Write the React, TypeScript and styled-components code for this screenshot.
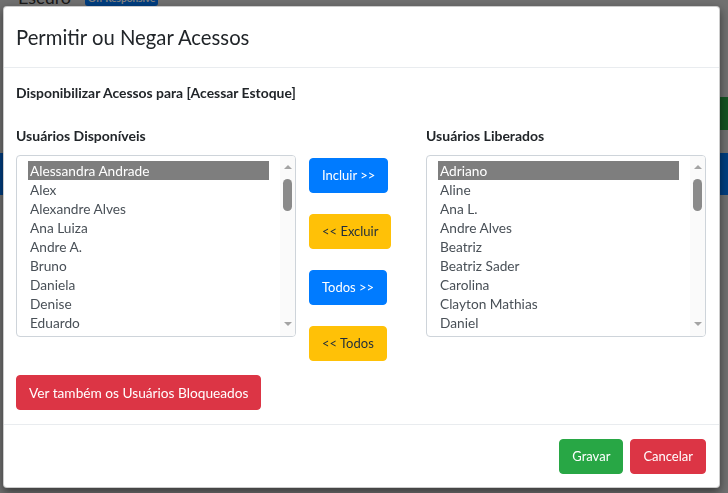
import React from 'react';
import styled, { createGlobalStyle } from 'styled-components';

const GlobalStyle = createGlobalStyle`
  html, body {
    margin: 0;
    padding: 0;
  }
  body {
    font-family: Lato, "Liberation Sans", Arial, sans-serif;
    background: #e0e0e0;
    color: #212529;
    overflow: hidden;
  }
`;

/* page behind the modal */
const Page = styled.div`
  width: 728px;
  height: 493px;
  overflow: hidden;
`;

const TopRow = styled.div`
  display: flex;
  align-items: flex-end;
  gap: 14px;
  height: 18px;
  margin-top: -12px;
  padding-left: 18px;
`;

const PageText = styled.span`
  font-size: 18px;
  line-height: 18px;
  color: #333;
`;

const Badge = styled.span`
  background: #007bff;
  color: #fff;
  font-size: 10px;
  font-weight: 700;
  line-height: 16px;
  padding: 0 3px;
  border-radius: 3px;
`;

const ActionRow = styled.div`
  display: flex;
  justify-content: flex-end;
  margin-top: 91px;
`;

const GreenTab = styled.div`
  width: 30px;
  height: 33px;
  background: #28a745;
  color: #fff;
  font-size: 16px;
  line-height: 33px;
  padding-left: 2px;
  box-sizing: border-box;
`;

const BlueBand = styled.div`
  margin-top: 23px;
  height: 42px;
  background: #007bff;
`;

const Backdrop = styled.div`
  position: fixed;
  inset: 0;
  background: rgba(0, 0, 0, 0.5);
`;

/* modal */
const Modal = styled.div`
  position: fixed;
  top: 6px;
  left: 3px;
  width: 717px;
  box-sizing: border-box;
  background: #fff;
  border: 1px solid rgba(0, 0, 0, 0.2);
  border-radius: 4px;
  box-shadow: 0 4px 10px rgba(0, 0, 0, 0.5);
  display: flex;
  flex-direction: column;
`;

const Header = styled.div`
  padding: 15px 13px 15px 12px;
  border-bottom: 1px solid #e9ecef;
`;

const Title = styled.h5`
  margin: 0;
  font-size: 20.3px;
  font-weight: 400;
  line-height: 30px;
  color: #212529;
`;

const Body = styled.div`
  padding: 16px 13px 14px 12px;
  display: flex;
  flex-direction: column;
  align-items: flex-start;
`;

const Intro = styled.div`
  font-size: 13.9px;
  font-weight: 700;
  line-height: 18px;
`;

const Columns = styled.div`
  margin-top: 25px;
  width: 100%;
  display: grid;
  grid-template-columns: 280px 1fr 280px;
`;

const ListColumn = styled.div`
  display: flex;
  flex-direction: column;
`;

const Label = styled.label`
  font-size: 14px;
  font-weight: 700;
  line-height: 18px;
  margin-bottom: 10px;
`;

const ListBox = styled.div`
  height: 182px;
  box-sizing: border-box;
  border: 1px solid #ced4da;
  border-radius: 4px;
  display: flex;
  overflow: hidden;
`;

const Options = styled.div`
  flex: 1;
  padding: 5px 11px 0 11px;
  overflow: hidden;
`;

const Option = styled.div<{ $selected?: boolean }>`
  height: 19px;
  line-height: 19px;
  font-size: 13.7px;
  padding-left: 2px;
  white-space: nowrap;
  color: ${(p) => (p.$selected ? '#fff' : '#495057')};
  background: ${(p) => (p.$selected ? '#7e7e7e' : 'transparent')};
`;

const ScrollBar = styled.div`
  width: 15px;
  background: #fafafa;
  display: flex;
  flex-direction: column;
  align-items: center;
`;

const Arrow = styled.div<{ $down?: boolean; $h: number }>`
  height: ${(p) => p.$h}px;
  display: flex;
  align-items: center;
  justify-content: center;
  &::after {
    content: '';
    border-left: 4px solid transparent;
    border-right: 4px solid transparent;
    ${(p) => (p.$down ? 'border-top: 4px solid #a3a3a3;' : 'border-bottom: 4px solid #a3a3a3;')}
  }
`;

const Thumb = styled.div`
  width: 9px;
  height: 32px;
  margin-top: 1px;
  border-radius: 5px;
  background: #8a8a8a;
`;

const Track = styled.div`
  flex: 1;
`;

const Actions = styled.div`
  padding: 31px 0 0 13px;
  display: flex;
  flex-direction: column;
  align-items: flex-start;
  gap: 21px;
`;

const colors = {
  primary: { bg: '#007bff', fg: '#fff' },
  warning: { bg: '#ffc107', fg: '#1f2d3d' },
  danger: { bg: '#dc3545', fg: '#fff' },
  success: { bg: '#28a745', fg: '#fff' },
};

type Variant = keyof typeof colors;

const Button = styled.button<{ $variant: Variant }>`
  font-family: inherit;
  font-size: 13px;
  line-height: 21px;
  padding: 6px 12px;
  border: 1px solid ${(p) => colors[p.$variant].bg};
  border-radius: 4px;
  background: ${(p) => colors[p.$variant].bg};
  color: ${(p) => colors[p.$variant].fg};
  cursor: pointer;
  white-space: nowrap;
`;

const BlockedButton = styled(Button)`
  margin-top: 14px;
  font-size: 13.7px;
`;

const Footer = styled.div`
  border-top: 1px solid #e9ecef;
  padding: 14px 13px 13px 12px;
  display: flex;
  justify-content: flex-end;
  gap: 7px;
`;

const available = [
  'Alessandra Andrade',
  'Alex',
  'Alexandre Alves',
  'Ana Luiza',
  'Andre A.',
  'Bruno',
  'Daniela',
  'Denise',
  'Eduardo',
  'Fernanda',
];

const released = [
  'Adriano',
  'Aline',
  'Ana L.',
  'Andre Alves',
  'Beatriz',
  'Beatriz Sader',
  'Carolina',
  'Clayton Mathias',
  'Daniel',
  'Daniel Souza',
];

const UserList = ({ title, users }: { title: string; users: string[] }) => (
  <ListColumn>
    <Label>{title}</Label>
    <ListBox>
      <Options>
        {users.map((u, i) => (
          <Option key={u} $selected={i === 0}>
            {u}
          </Option>
        ))}
      </Options>
      <ScrollBar>
        <Arrow $h={22} />
        <Thumb />
        <Track />
        <Arrow $h={24} $down />
      </ScrollBar>
    </ListBox>
  </ListColumn>
);

export default function App() {
  return (
    <>
      <GlobalStyle />
      <Page>
        <TopRow>
          <PageText>Escuro</PageText>
          <Badge>Off Responsive</Badge>
        </TopRow>
        <ActionRow>
          <GreenTab>V</GreenTab>
        </ActionRow>
        <BlueBand />
      </Page>
      <Backdrop />
      <Modal>
        <Header>
          <Title>Permitir ou Negar Acessos</Title>
        </Header>
        <Body>
          <Intro>Disponibilizar Acessos para [Acessar Estoque]</Intro>
          <Columns>
            <UserList title="Usuários Disponíveis" users={available} />
            <Actions>
              <Button $variant="primary">Incluir &gt;&gt;</Button>
              <Button $variant="warning">&lt;&lt; Excluir</Button>
              <Button $variant="primary">Todos &gt;&gt;</Button>
              <Button $variant="warning">&lt;&lt; Todos</Button>
            </Actions>
            <UserList title="Usuários Liberados" users={released} />
          </Columns>
          <BlockedButton $variant="danger">Ver também os Usuários Bloqueados</BlockedButton>
        </Body>
        <Footer>
          <Button $variant="success">Gravar</Button>
          <Button $variant="danger">Cancelar</Button>
        </Footer>
      </Modal>
    </>
  );
}
